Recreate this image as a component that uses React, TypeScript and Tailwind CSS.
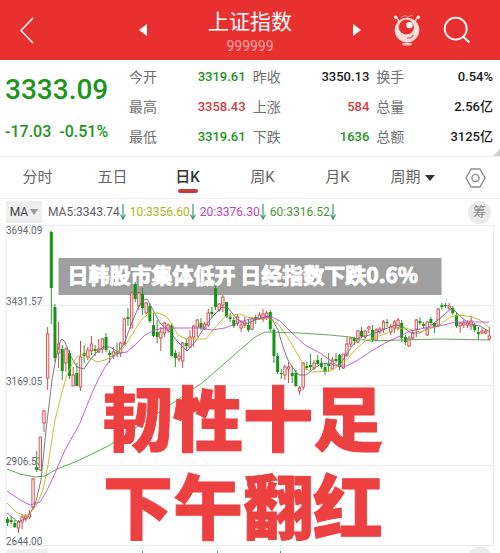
import React from 'react';

type Candle = [
  high: number,
  low: number,
  top: number,
  bottom: number,
  dir: 'u' | 'd'
];

const FIRST_X = 7.5;
const STEP = 3.65;

const candles: Candle[] = [
  [517, 526, 519, 523, 'd'], [517, 524, 520, 522, 'd'], [520, 528, 523, 527, 'd'], [520, 533, 522, 528, 'u'],
  [514, 529, 517, 522, 'u'], [514, 521, 516, 519, 'u'], [510, 519, 514, 517, 'u'], [478, 509, 479, 507, 'u'],
  [451, 472, 467, 470, 'd'], [437, 471, 437, 470, 'u'], [410, 432, 411, 423, 'u'], [327, 390, 334, 378, 'u'],
  [231, 324, 232, 288, 'd'], [304, 362, 307, 358, 'd'], [322, 368, 344, 353, 'u'], [345, 380, 349, 371, 'd'],
  [347, 372, 349, 363, 'u'], [350, 379, 353, 376, 'd'], [367, 386, 375, 386, 'u'], [363, 386, 373, 386, 'd'],
  [341, 391, 357, 387, 'u'], [345, 363, 353, 356, 'd'], [347, 360, 350, 357, 'u'], [336, 355, 344, 351, 'u'],
  [345, 356, 349, 351, 'd'], [339, 353, 349, 352, 'u'], [338, 353, 339, 349, 'u'], [333, 352, 337, 350, 'd'],
  [350, 363, 353, 355, 'd'], [347, 359, 352, 356, 'u'], [343, 357, 352, 354, 'd'], [342, 357, 343, 353, 'u'],
  [318, 345, 319, 344, 'u'], [308, 326, 317, 319, 'd'], [292, 328, 293, 328, 'u'], [282, 302, 284, 299, 'd'],
  [292, 310, 293, 306, 'u'], [288, 315, 294, 308, 'd'], [302, 314, 303, 313, 'u'], [303, 323, 306, 321, 'd'],
  [313, 337, 325, 336, 'd'], [320, 343, 332, 337, 'd'], [327, 351, 332, 338, 'u'], [322, 337, 323, 333, 'u'],
  [323, 333, 325, 330, 'u'], [323, 357, 325, 356, 'd'], [350, 367, 353, 358, 'd'], [352, 362, 356, 359, 'u'],
  [342, 368, 343, 361, 'u'], [338, 350, 343, 346, 'd'], [330, 348, 337, 347, 'u'], [325, 347, 326, 337, 'u'],
  [319, 337, 320, 327, 'u'], [318, 330, 323, 328, 'd'], [322, 330, 324, 329, 'u'], [309, 327, 313, 325, 'u'],
  [307, 318, 312, 314, 'd'], [286, 310, 288, 307, 'd'], [303, 312, 304, 310, 'u'], [295, 312, 297, 305, 'u'],
  [302, 318, 302, 317, 'd'], [313, 322, 317, 319, 'd'], [317, 328, 320, 326, 'd'], [314, 326, 317, 323, 'u'],
  [320, 332, 325, 328, 'u'], [317, 328, 322, 325, 'u'], [320, 332, 325, 330, 'd'], [317, 330, 318, 329, 'u'],
  [315, 324, 317, 320, 'd'], [312, 320, 315, 319, 'u'], [309, 322, 314, 319, 'u'], [311, 320, 313, 317, 'u'],
  [310, 332, 312, 329, 'd'], [328, 363, 330, 356, 'd'], [353, 374, 356, 372, 'd'], [369, 379, 373, 374, 'd'],
  [365, 380, 367, 375, 'u'], [362, 383, 367, 369, 'u'], [366, 383, 373, 376, 'd'], [370, 387, 373, 386, 'd'],
  [386, 395, 388, 391, 'u'], [362, 390, 363, 387, 'u'], [362, 370, 366, 368, 'd'], [354, 370, 365, 367, 'd'],
  [360, 370, 363, 368, 'u'], [355, 365, 360, 364, 'd'], [358, 369, 363, 367, 'd'], [363, 375, 367, 372, 'd'],
  [353, 372, 364, 366, 'd'], [357, 370, 360, 369, 'u'], [353, 363, 359, 361, 'd'], [354, 370, 355, 367, 'd'],
  [354, 369, 354, 368, 'u'], [337, 357, 344, 355, 'u'], [337, 347, 338, 344, 'u'], [337, 345, 338, 341, 'd'],
  [330, 343, 331, 342, 'u'], [327, 338, 331, 336, 'd'], [330, 339, 331, 337, 'u'], [326, 333, 327, 329, 'u'],
  [325, 342, 330, 340, 'd'], [328, 341, 330, 340, 'u'], [327, 334, 329, 332, 'u'], [320, 333, 322, 329, 'u'],
  [319, 327, 322, 323, 'd'], [324, 335, 327, 332, 'u'], [320, 333, 322, 328, 'u'], [318, 330, 320, 328, 'u'],
  [320, 342, 323, 338, 'd'], [335, 345, 337, 342, 'd'], [336, 347, 338, 346, 'u'], [331, 340, 333, 338, 'u'],
  [319, 337, 320, 329, 'u'], [317, 325, 321, 323, 'd'], [322, 328, 324, 326, 'd'], [321, 336, 322, 335, 'u'],
  [317, 325, 319, 323, 'd'], [322, 333, 323, 327, 'd'], [308, 327, 309, 325, 'u'], [303, 309, 305, 307, 'd'],
  [303, 308, 305, 306, 'd'], [303, 310, 306, 308, 'u'], [306, 315, 308, 313, 'd'], [312, 328, 315, 326, 'd'],
  [322, 333, 323, 326, 'u'], [320, 328, 323, 325, 'u'], [320, 328, 323, 325, 'u'], [316, 330, 321, 326, 'u'],
  [323, 332, 325, 330, 'd'], [327, 340, 332, 334, 'd'], [328, 334, 331, 333, 'u'], [329, 334, 331, 333, 'u'],
  [327, 340, 336, 339, 'u'],
];

const averages = [
  {
    color: '#6d6d74',
    points:
      '7,513 18,522 27,518 35,505 41,480 46,430 52,380 56,358 60,342 62,339 65,342 70,355 77,367 84,369 90,360 97,352 103,347 110,347 118,352 124,344 131,325 138,308 143,300 147,299 152,308 160,323 165,328 170,332 177,341 187,351 195,342 206,325 214,315 222,307 228,308 237,319 245,324 258,319 268,316 272,319 278,330 283,347 288,360 293,368 299,375 306,375 313,369 321,364 330,363 336,366 341,363 352,346 360,337 370,335 380,331 395,325 402,326 411,333 420,333 428,328 438,320 452,308 462,318 470,324 480,326 490,332',
  },
  {
    color: '#c0b822',
    points:
      '7,503 16,512 27,517 36,506 43,490 48,465 55,420 62,392 67,375 72,364 78,356 84,354 90,358 97,362 105,360 117,353 125,346 133,333 142,319 150,313 158,313 166,316 171,323 178,335 187,339 206,339 213,330 220,322 226,316 240,314 247,317 258,319 268,318 278,324 288,338 298,355 306,369 312,372 330,371 345,362 355,350 365,341 385,334 395,329 405,328 420,332 432,328 440,325 450,317 460,315 472,317 480,320 489,327',
  },
  {
    color: '#c350cb',
    points:
      '7,491 20,500 30,505 40,502 46,492 52,480 65,450 80,423 92,393 98,380 105,367 113,356 120,353 127,352 135,345 145,335 155,330 165,328 200,328 212,330 225,328 240,322 250,319 262,318 272,317 280,321 292,333 305,345 320,353 330,360 338,366 347,366 358,360 370,352 385,343 400,336 410,331 425,328 440,326 455,322 489,322',
  },
  {
    color: '#539c48',
    points:
      '7,469 20,474 35,477 45,476 57,469 75,462 90,455 110,445 140,425 170,405 193,389 202,383 225,363 240,350 255,337 265,332 300,333 330,335 350,337 370,341 400,340 440,339 490,340',
  },
];

const gridLines = [225.5, 305.5, 385.5, 465.5, 545.5];

const priceLabels = [
  { text: '3694.09', y: 234 },
  { text: '3431.57', y: 305 },
  { text: '3169.05', y: 385 },
  { text: '2906.53', y: 465 },
  { text: '2644.00', y: 545 },
];

const stats = [
  { label: '今开', value: '3319.61', color: 'text-[#1c951c]' },
  { label: '昨收', value: '3350.13', color: 'text-[#1c1c1c]' },
  { label: '换手', value: '0.54%', color: 'text-[#1c1c1c]' },
  { label: '最高', value: '3358.43', color: 'text-[#cf3f42]' },
  { label: '上涨', value: '584', color: 'text-[#cf3f42]' },
  { label: '总量', value: '2.56亿', color: 'text-[#1c1c1c]' },
  { label: '最低', value: '3319.61', color: 'text-[#1c951c]' },
  { label: '下跌', value: '1636', color: 'text-[#1c951c]' },
  { label: '总额', value: '3125亿', color: 'text-[#1c1c1c]' },
];

const tabs = ['分时', '五日', '日K', '周K', '月K'];

const maValues = [
  { text: 'MA5:3343.74', color: 'text-[#606064]' },
  { text: '10:3356.60', color: 'text-[#b5b11c]' },
  { text: '20:3376.30', color: 'text-[#b83fc0]' },
  { text: '60:3316.52', color: 'text-[#4a983c]' },
];

function MascotIcon() {
  return (
    <svg className="h-8 w-7" viewBox="0 0 28 32" fill="none">
      <path d="M6 7 L3 3 M22 7 L25 3" stroke="#ffd5d0" strokeWidth="1.3" />
      <circle cx="2.7" cy="3.2" r="1.7" fill="#fff0ee" />
      <circle cx="25.3" cy="3.2" r="1.7" fill="#fff0ee" />
      <path d="M8 3.5 L12 1.5 L15 3 L20 1" stroke="#f9a09c" strokeWidth="0.9" />
      <ellipse cx="14" cy="30" rx="5" ry="1.5" fill="#fbc5c0" />
      <circle cx="14" cy="16" r="12.3" fill="#fde0dc" />
      <circle cx="13.3" cy="13" r="7.6" fill="#e93030" />
      <circle cx="16.5" cy="11" r="3.2" fill="#fff" />
      <path d="M14 24 Q18.5 24.5 20.5 21" stroke="#e05550" strokeWidth="1.1" />
    </svg>
  );
}

function Header() {
  return (
    <header className="grid h-[60px] grid-cols-[1fr_222px_1fr] items-center bg-[#e93030] text-white">
      <button aria-label="返回" className="justify-self-start pl-5">
        <svg className="h-7 w-[14px]" viewBox="0 0 14 28" fill="none" stroke="#fff" strokeWidth="1.5">
          <path d="M13 2 L1 14.5 L13 27" />
        </svg>
      </button>
      <div className="flex items-center justify-between">
        <button aria-label="上一个">
          <svg className="h-3 w-2" viewBox="0 0 8 12" fill="#fff">
            <path d="M8 0 V12 L0 6 Z" />
          </svg>
        </button>
        <div className="pt-2 text-center">
          <h1 className="text-[21px] leading-6 font-normal">上证指数</h1>
          <p className="text-sm leading-6 text-[#f9a3a0]">999999</p>
        </div>
        <button aria-label="下一个">
          <svg className="h-3 w-2" viewBox="0 0 8 12" fill="#fff">
            <path d="M0 0 V12 L8 6 Z" />
          </svg>
        </button>
      </div>
      <div className="flex items-center justify-end gap-[22px] pr-[29px]">
        <button aria-label="助手">
          <MascotIcon />
        </button>
        <button aria-label="搜索">
          <svg className="h-7 w-7" viewBox="0 0 28 28" fill="none" stroke="#fff" strokeWidth="1.8">
            <circle cx="12.7" cy="12.7" r="11" />
            <path d="M20 20.5 L26.5 26.5" />
          </svg>
        </button>
      </div>
    </header>
  );
}

function Quote() {
  return (
    <section className="relative flex border-b border-[#efefef] pt-[2px] pr-[7px] pb-1">
      <div className="w-[129px] shrink-0 pl-[5px] font-medium whitespace-nowrap text-[#1c951c]">
        <p className="pt-2 text-[28px] leading-10">3333.09</p>
        <p className="flex gap-2 pt-[10px] text-base leading-6">
          <span>-17.03</span>
          <span>-0.51%</span>
        </p>
      </div>
      <dl className="grid flex-1 grid-cols-3 gap-x-[7px]">
        {stats.map((s) => (
          <div key={s.label} className="flex h-[30px] items-center justify-between">
            <dt className="text-sm text-[#707070]">{s.label}</dt>
            <dd className={`text-[13px] font-medium ${s.color}`}>{s.value}</dd>
          </div>
        ))}
      </dl>
      <svg className="absolute right-0 bottom-0 h-[7px] w-[7px]" viewBox="0 0 7 7" fill="#cfcfcf">
        <path d="M7 0 V7 H0 Z" />
      </svg>
    </section>
  );
}

function Tabs() {
  return (
    <nav className="grid h-[42px] grid-cols-[repeat(6,3fr)_2fr] border-b border-[#efefef] text-[15px] text-[#666]">
      {tabs.map((tab) => (
        <button key={tab} className="flex flex-col items-center pt-2">
          <span className={tab === '日K' ? 'leading-6 font-medium text-[#333]' : 'leading-6'}>{tab}</span>
          {tab === '日K' && <span className="h-1 w-5 rounded-full bg-[#cb3a3a]" />}
        </button>
      ))}
      <button className="flex items-center justify-center gap-1">
        周期
        <svg className="h-[6px] w-[10px]" viewBox="0 0 10 6" fill="#333">
          <path d="M0 0 H10 L5 6 Z" />
        </svg>
      </button>
      <button aria-label="设置" className="flex items-center justify-center">
        <svg className="h-5 w-[21px]" viewBox="0 0 21 20" fill="none" stroke="#8b8b8b" strokeWidth="1.4">
          <path d="M6 1 H15 L20 10 L15 19 H6 L1 10 Z" strokeLinejoin="round" />
          <circle cx="10.5" cy="10" r="3.6" />
        </svg>
      </button>
    </nav>
  );
}

function AverageBar() {
  return (
    <div className="flex h-[26px] items-center pr-[9px] pl-[6px] text-xs">
      <button className="mr-[6px] flex h-[22px] w-9 items-center justify-center gap-[2px] bg-[#efefef] text-[#444]">
        MA
        <svg className="h-[6px] w-2" viewBox="0 0 8 6" fill="#999">
          <path d="M0 0 H8 L4 6 Z" />
        </svg>
      </button>
      <div className="flex flex-1 gap-1 whitespace-nowrap">
        {maValues.map((m) => (
          <span key={m.text} className={`flex items-center ${m.color}`}>
            {m.text}
            <svg className="h-4 w-[6px]" viewBox="0 0 6 16" fill="none" stroke="#399b70" strokeWidth="1.2">
              <path d="M3 0 V15 M0.5 10.5 L3 15 L5.5 10.5" />
            </svg>
          </span>
        ))}
      </div>
      <button className="flex h-[23px] w-[23px] items-center justify-center rounded-full bg-[#ebebeb] text-[13px] text-[#888]">
        筹
      </button>
    </div>
  );
}

function KLineChart() {
  return (
    <svg className="relative block w-full" viewBox="0 225 500 328">
      <g stroke="#ececec" strokeWidth="1">
        {gridLines.map((y) => (
          <path key={y} d={`M6 ${y} H493`} />
        ))}
        <path d="M6 225 V545 M493.5 225 V545" />
      </g>
      <rect x="6" y="549" width="41" height="4" fill="#efefef" />
      <circle cx="480" cy="558" r="11.5" fill="#ebebeb" />
      <path d="M142.5 551 V553 M217.5 551 V553 M280.5 551 V553" stroke="#399b70" />
      <g fill="#666a70" fontSize="10">
        {priceLabels.map((l) => (
          <text key={l.text} x="6" y={l.y}>
            {l.text}
          </text>
        ))}
      </g>
      {candles.map(([high, low, top, bottom, dir], i) => {
        const x = FIRST_X + i * STEP;
        const height = Math.max(bottom - top, 1);
        if (dir === 'd') {
          return (
            <g key={i}>
              <path d={`M${x} ${high} V${low}`} stroke="#2b9a2b" />
              <rect x={x - 1.5} y={top} width="3" height={height} fill="#149614" />
            </g>
          );
        }
        return (
          <g key={i} stroke="#d24a50">
            <path d={`M${x} ${high} V${low}`} />
            <rect x={x - 1.2} y={top} width="2.4" height={height} fill="#fdeaea" strokeWidth="0.9" />
          </g>
        );
      })}
      {averages.map((line) => (
        <polyline
          key={line.color}
          points={line.points}
          fill="none"
          stroke={line.color}
          strokeWidth="0.9"
          strokeLinejoin="round"
        />
      ))}
    </svg>
  );
}

export default function App() {
  return (
    <main className="w-full overflow-hidden bg-white font-['Roboto','Noto_Sans_CJK_SC',sans-serif]">
      <Header />
      <Quote />
      <Tabs />
      <AverageBar />
      <div className="relative">
        {/* banner sits under the candles, the slogan over them */}
        <p className="absolute top-[33px] left-1/2 flex h-[37px] w-[383px] -translate-x-1/2 items-center bg-[#9f9f9f] pb-1 pl-[9px] font-['Noto_Sans_CJK_SC',sans-serif] text-[21px] font-bold whitespace-nowrap text-white [-webkit-text-stroke:1px_white]">
          日韩股市集体低开 日经指数下跌0.6%
        </p>
        <KLineChart />
        <p className="absolute inset-x-0 top-[147px] pr-[14px] text-center font-['Noto_Sans_CJK_SC',sans-serif] text-[70px] leading-[88px] font-black text-[#ed4040] [-webkit-text-stroke:1px_#ed4040]">
          韧性十足
          <br />
          下午翻红
        </p>
      </div>
    </main>
  );
}
